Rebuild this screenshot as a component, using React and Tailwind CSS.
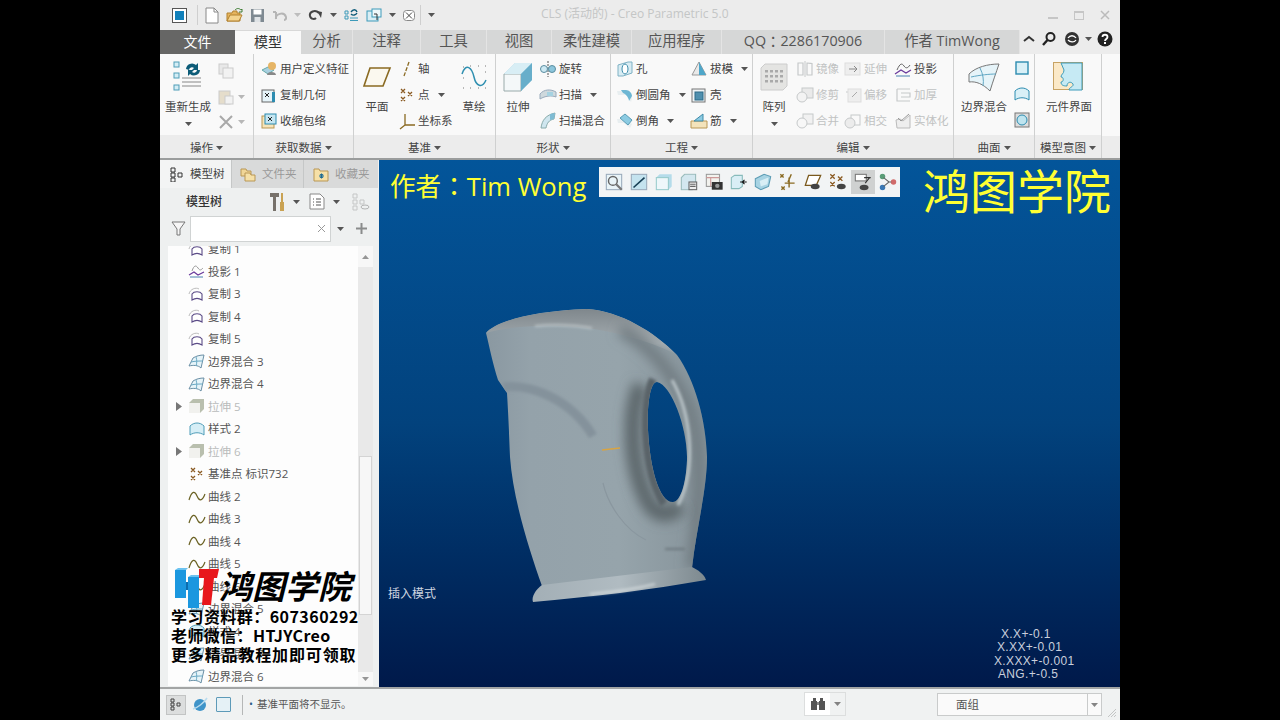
import React from 'react';

const Svg = ({ s = 16, h, className = '', children }) => (
  <svg width={s} height={h || s} viewBox={`0 0 ${s} ${h || s}`} className={`shrink-0 ${className}`} fill="none">
    {children}
  </svg>
);

const Caret = ({ className = '' }) => (
  <svg width="7" height="4" viewBox="0 0 7 4" className={`shrink-0 ${className}`}><path d="M0 0h7L3.5 4z" fill="#555" /></svg>
);

// --- ribbon icons
const Cube = ({ x, y, s = 5 }) => <rect x={x} y={y} width={s} height={s} fill="#d4edf5" stroke="#4f9db8" />;

const RegenIcon = () => (
  <Svg s={32}>
    <Cube x={2} y={1} /><Cube x={2} y={12} /><Cube x={2} y={24} />
    <path d="M14 8a6 6 0 0 1 10-4l2-2v7h-6l2-2a3 3 0 0 0-5 2z" fill="#0d5c78" />
    <path d="M28 9a6 6 0 0 1-10 4l-2 2V9h6l-2 2a3 3 0 0 0 5-2z" fill="#0d5c78" />
    <path d="M10 17h19M10 21h19M10 25h19" stroke="#888" strokeWidth="1.2" />
  </Svg>
);
const PlaneIcon = () => (
  <Svg s={30} h={22}><path d="M8 2h20l-7 18H2z" fill="#fbf8ef" stroke="#8a6a22" strokeWidth="1.6" /></Svg>
);
const SketchIcon = () => (
  <Svg s={28} h={26}>
    <path d="M2 10C6 -2 12 4 14 13s8 12 12 3" stroke="#2f8fb0" strokeWidth="1.5" />
    <path d="M3 3h1M10 2h1M18 2h1M25 2h1M3 24h1M10 24h1M18 24h1M25 24h1M3 14h1M25 8h1" stroke="#777" />
  </Svg>
);
const ExtrudeIcon = () => (
  <Svg s={30}>
    <path d="M1 12 12 1h17v17L18 29H1z" fill="#a9d6e6" />
    <path d="M1 12h17v17H1z" fill="#f4f8f9" stroke="#9aa" />
    <path d="M1 12 12 1h17L18 12z" fill="#d8eef5" />
    <path d="M18 12 29 1v17L18 29z" fill="#67aeca" />
  </Svg>
);
const ArrayIcon = () => (
  <Svg s={28}>
    <path d="M1 5 5 1h22v22l-4 4H1z" fill="#e4e4e2" stroke="#ccc" />
    {[7, 12, 17].map(y => [5, 10, 15, 20].map(x => <rect key={`${x}-${y}`} x={x} y={y} width="3" height="2.5" fill="#aaa" />))}
  </Svg>
);
const BlendBig = () => (
  <Svg s={32} h={30}>
    <path d="M1 12C8 5 20 2 31 2c-3 9-6 17-9 27C15 22 8 19 1 20z" fill="#e6f4f9" stroke="#777" />
    <path d="M12 6c3 6 4 12 3 18M3 15c9-2 19-3 25-3" stroke="#5fa7c4" />
  </Svg>
);
const PuzzleIcon = () => (
  <Svg s={32} h={30}>
    <rect x=".5" y=".5" width="29" height="27" fill="#fbe9c8" stroke="#c7a364" />
    <path d="M8 1h21v27H16c0-3 5-3 4-6-2-3-6-2-6 2-4 0-6-1-6-4 3 0 3-5 0-5 0-3 3-3 3-7z" fill="#c6eaf4" stroke="#3c9cbb" />
  </Svg>
);
const SmallSq = () => <Svg s={16}><rect x="2" y="2" width="12" height="12" fill="#d9f0f7" stroke="#2d8cb0" strokeWidth="1.4" /></Svg>;
const SmallArc = () => <Svg s={16}><path d="M1 14V5c4-4 10-4 14 0v9c-4-3-10-3-14 0z" fill="#d9f0f7" stroke="#2d8cb0" /></Svg>;
const SmallOff = () => <Svg s={16}><rect x="1" y="1" width="14" height="14" fill="#ddd" stroke="#777" /><circle cx="8" cy="8" r="5" fill="#bfe4ef" stroke="#2d8cb0" /></Svg>;

const UdfI = () => <Svg><path d="M1 9l6-3 6 3-6 4z" fill="#a9d0e0" stroke="#6aa" /><circle cx="11" cy="5" r="4" fill="#e6b566" /><path d="M6 14c0-4 9-4 9 0z" fill="#888" /></Svg>;
const CopyGeoI = () => <Svg><rect x="1" y="3" width="12" height="12" fill="#e6f4f9" stroke="#666" /><path d="M4 6l4 4M8 6l-4 4" stroke="#222" /><path d="M11 5v10h3V5z" fill="#2d8cb0" /></Svg>;
const ShrinkI = () => <Svg><rect x="1" y="3" width="12" height="12" fill="#f7e4b8" stroke="#b99755" /><rect x="4" y="1" width="11" height="10" fill="#c6e6f1" stroke="#2d8cb0" /><path d="M7 4l4 4M11 4l-4 4" stroke="#222" /></Svg>;
const AxisI = () => <Svg><path d="M10 1 5 15" stroke="#8a6a22" strokeDasharray="4 1.5" strokeWidth="1.3" /></Svg>;
const PointI = ({ c = '#8a5a22' }) => (
  <Svg>
    <path d="M2 2l4 4M6 2 2 6M9 5l4 4M13 5 9 9M2 10l4 4M6 10l-4 4" stroke={c} strokeWidth="1.3" />
  </Svg>
);
const CsysI = () => <Svg s={18}><path d="M7 2v11M7 13H17M7 13l-5 4" stroke="#8a6a22" strokeWidth="1.3" /></Svg>;
const RevolveI = () => <Svg s={18} h={16}><path d="M9 0v16" stroke="#555" strokeDasharray="2 1" /><ellipse cx="5" cy="8" rx="3.5" ry="3.5" fill="#cde9f3" stroke="#5a8da0" /><ellipse cx="13" cy="8" rx="3.5" ry="3.5" fill="#8cc6dc" stroke="#5a8da0" /></Svg>;
const SweepI = () => <Svg s={18} h={16}><path d="M1 7c4-5 11-5 16-2v5c-5-2-11-1-16 2z" fill="#cfd9dd" stroke="#9ab" /><path d="M8 5h6v4H8z" fill="#a6d2e1" /></Svg>;
const SweepBlendI = () => <Svg s={18}><path d="M2 16C3 8 7 3 16 1l-1 6c-5 1-7 4-8 9z" fill="#cfe6ef" stroke="#8aa" /><path d="M11 2l5-1-1 6-4 1z" fill="#7fbcd4" /></Svg>;
const HoleI = () => <Svg s={18} h={16}><path d="M2 4l10-3h4v11l-9 3H2z" fill="#d8ecf3" stroke="#7fb1c4" /><ellipse cx="9" cy="8" rx="3" ry="5" fill="#fff" stroke="#3d8cab" /></Svg>;
const RoundI = () => <Svg s={18} h={16}><path d="M1 4h8c4 0 7 3 7 7l-1 4-5-7H2z" fill="#e8eef0" /><path d="M5 3h5c3 0 6 3 6 6l-3 5c0-3-3-7-6-8z" fill="#6db6d3" /></Svg>;
const ChamferI = () => <Svg s={18} h={16}><path d="M1 6h9l6 5-2 4-6-5H2z" fill="#e8eef0" /><path d="M4 5l5-4 7 6-4 5z" fill="#8ccbe2" stroke="#5a9db6" /></Svg>;
const DraftI = () => <Svg s={18} h={16}><path d="M2 14 9 1l7 13z" fill="#e9e9e9" stroke="#999" /><path d="M9 1l7 13H9z" fill="#4ea6c9" /></Svg>;
const ShellI = () => <Svg s={18} h={16}><rect x="2" y="2" width="13" height="13" fill="#eef3f5" stroke="#777" /><rect x="5" y="5" width="8" height="8" fill="#4f8fae" stroke="#2c6a88" /></Svg>;
const RibI = () => <Svg s={18} h={16}><path d="M1 8h16v7H1z" fill="#f3e3bb" stroke="#b99755" /><path d="M4 8 13 1v7z" fill="#8ccbe2" stroke="#3f8aa8" /></Svg>;

const gr = '#c6c9ca';
const MirrorI = () => <Svg s={18} h={16}><path d="M9 0v16" stroke={gr} /><path d="M2 2h5v12H2zM11 2c3 0 5 1 5 0v12h-5z" stroke={gr} strokeWidth="1.2" /></Svg>;
const ExtendI = () => <Svg s={18} h={16}><rect x="1" y="2" width="15" height="12" fill="#eee" stroke="#ddd" /><path d="M5 8h7M10 5l3 3-3 3" stroke="#888" /></Svg>;
const TrimI = () => <Svg s={18} h={16}><rect x="6" y="1" width="11" height="10" fill="#eaeaea" stroke={gr} /><circle cx="6" cy="10" r="5" fill="#f3f3f3" stroke={gr} /></Svg>;
const OffsetI = () => <Svg s={18} h={16}><path d="M2 5h12v10" stroke={gr} /><rect x="4" y="2" width="13" height="13" fill="#eee" stroke="#ddd" /><path d="M8 10l5-5" stroke="#aaa" /></Svg>;
const ThickenI = () => <Svg s={18} h={16}><path d="M3 2h13M3 2v12h13M7 6h9v4H7" stroke={gr} strokeWidth="1.2" /></Svg>;
const MergeI = () => <Svg s={18} h={16}><rect x="7" y="1" width="10" height="10" stroke={gr} fill="#f1f1f1" /><circle cx="6" cy="10" r="5" stroke={gr} fill="#f7f7f7" /></Svg>;
const IntersectI = () => <Svg s={18} h={16}><rect x="7" y="2" width="9" height="10" stroke={gr} /><circle cx="6" cy="10" r="5" stroke={gr} fill="#ececec" /></Svg>;
const SolidifyI = () => <Svg s={18} h={16}><path d="M2 7l4-1 3 2 7-6v13H3z" fill="#eee" stroke="#bbb" /><path d="M4 5l3 3 8-7" stroke="#999" /></Svg>;
const ProjectI = () => (
  <Svg s={18} h={16}>
    <path d="M3 9c3-7 5-7 7-4s4 2 6-1" stroke="#666" />
    <path d="M1 13l6-4 5 3 5-3" stroke="#6a3a9c" strokeWidth="1.3" />
    <path d="M2 15h14" stroke="#4a80b0" />
  </Svg>
);

// --- title bar icons
const QuickNew = () => <Svg s={14} h={17}><path d="M1 1h8l4 4v11H1z" fill="#fff" stroke="#888" /><path d="M9 1v4h4" stroke="#888" /></Svg>;
const QuickOpen = () => <Svg s={17} h={16}><path d="M1 6h5l1-2h4v2h3v8H1z" fill="#e5b45e" stroke="#b2812f" /><path d="M1 14l3-6h12l-3 6z" fill="#f4d48f" stroke="#b2812f" /><path d="M9 3c2-2 4-2 6 0l1-1v3h-3" stroke="#3e7d33" /></Svg>;
const QuickSave = () => <Svg s={15}><rect x="1" y="1" width="13" height="13" fill="#7f8a92" /><rect x="3.5" y="1.5" width="8" height="5" fill="#fff" /><rect x="4.5" y="9" width="6" height="5" fill="#dfe3e6" /></Svg>;
const Undo = ({ c }) => <Svg s={15} h={11}><path d="M4 9V2M4 2H1M4 9c-1-5 8-8 10-2 .5 2-1 3-2 3" stroke={c} strokeWidth="2" /></Svg>;
const Redo = () => <Svg s={15} h={11}><path d="M11 3C7-1 1 2 2 6s5 3 6 2" stroke="#444" strokeWidth="2" /><path d="M9 1l5 1-1 6z" fill="#444" /></Svg>;
const Regen2 = () => <Svg s={15}><path d="M1 3h3v3H1zM1 8h3v3H1zM6 10h8M6 12.500h8" stroke="#3d9ab9" /><path d="M7 4c2-3 5-3 6 0M13 5c-1 2-4 3-6 1" stroke="#0c5a78" strokeWidth="1.4" /></Svg>;
const Windows = () => <Svg s={16} h={15}><rect x="1" y="3" width="11" height="10" fill="#d9eef5" stroke="#3d9ab9" /><rect x="6" y="1" width="9" height="8" fill="#eef8fb" stroke="#3d9ab9" /><path d="M8 6h3v6" stroke="#333" /></Svg>;
const CloseBox = () => <Svg s={12} h={11}><rect x=".5" y=".5" width="11" height="10" rx="3" fill="#fff" stroke="#888" /><path d="M3 2.500l6 6M9 2.500l-6 6" stroke="#444" /></Svg>;
const AppBox = () => (
  <span className="w-[15px] h-[15px] border border-[#555] bg-white flex items-center justify-center shrink-0">
    <span className="w-[9px] h-[9px] bg-[#1180ba] block" />
  </span>
);

// --- floating toolbar
const FT = [
  <><rect x="1" y="1" width="14" height="14" fill="#e9f4f8" stroke="#9ab" /><circle cx="7" cy="7" r="4" stroke="#666" strokeWidth="1.3" /><path d="M10 10l5 5" stroke="#777" strokeWidth="2" /></>,
  <><rect x="1" y="1" width="14" height="14" fill="#c4e3ef" stroke="#9ab" /><path d="M3 13 13 4" stroke="#173f55" strokeWidth="1.5" /></>,
  <><path d="M1 4l3-3h11v11l-3 3H1z" fill="#b5dcea" /><rect x="1" y="4" width="11" height="11" fill="#eef7fa" stroke="#9cc" /></>,
  <><path d="M1 4l3-3h10v11l-3 3H1z" fill="#d3e7ef" stroke="#9bb" /><rect x="8" y="8" width="7" height="7" fill="#eee" stroke="#666" /><path d="M9 10h5M9 12h5" stroke="#666" /></>,
  <><rect x="1" y="1" width="12" height="11" fill="#f2f2ee" stroke="#999" /><path d="M1 4h12M5 4v8" stroke="#c99" /><rect x="6" y="8" width="10" height="7" fill="#333" /><circle cx="11" cy="11.500" r="2" fill="#999" /></>,
  <><path d="M1 4l3-2h7v10l-3 2H1z" fill="#d9eef5" stroke="#8bb" /><path d="M9 8h6M13 6l-2 2 2 2" stroke="#111" /></>,
  <><path d="M1 5l8-4 6 2-2 9-7 3-5-3z" fill="#a7d3e3" stroke="#5e9db5" /><path d="M5 7l8-3-1 6-6 2z" fill="#d8eef5" /></>,
  <><path d="M1 1l3 3M4 1 1 4M2 12l3 3M5 12l-3 3M11 1 8 8M5 9h9M9 4v9" stroke="#8a6a22" strokeWidth="1.3" /></>,
  <><path d="M4 2h11l-4 9H1z" fill="#fff" stroke="#7b5a1e" strokeWidth="1.2" /><ellipse cx="10" cy="12" rx="4" ry="2.500" fill="#444" /></>,
  <><path d="M1 1l4 4M5 1 1 5M8 3l4 4M12 3 8 7M1 8l4 4M5 8l-4 4" stroke="#8a5a22" strokeWidth="1.2" /><ellipse cx="11" cy="12" rx="4" ry="2.500" fill="#444" /></>,
  <><rect x="1" y="1" width="10" height="6" fill="#fff" stroke="#777" /><path d="M9 4h6M14 4l-4 5" stroke="#333" /><ellipse cx="9" cy="13" rx="4" ry="2.500" fill="#444" /></>,
  <><circle cx="3" cy="3" r="2.500" fill="#5a9d78" /><circle cx="3" cy="13" r="2.500" fill="#3b78b5" /><circle cx="13" cy="8" r="2.500" fill="#d06a6a" /><path d="M4 4l5 4-5 4M9 8h2" stroke="#666" /></>,
];

// --- model tree icons
const TreeCopy = () => <Svg s={18} h={16}><path d="M1 8C2 3 8 1 11 3" stroke="#bbb" /><path d="M4 14V8c2-3 8-3 10 0v6c-3-2-7-2-10 0z" stroke="#5a4a86" strokeWidth="1.1" fill="#fff" /></Svg>;
const TreeProj = () => <Svg s={18} h={16}><path d="M4 8c2-6 4-6 6-3s3 2 5 0" stroke="#999" /><path d="M1 12l5-3 4 3 6-3" stroke="#6a3a9c" strokeWidth="1.2" /><path d="M2 14h13" stroke="#4a80b0" /></Svg>;
const TreeBlend = () => <Svg s={18} h={16}><path d="M1 13 5 5c3-2 7-3 11-3l-3 13c-3-3-8-3-12-2z" fill="#e6f4f9" stroke="#6a8fa5" /><path d="M8 4c1 3 1 6 0 9M3 9c4-1 8-1 12-1" stroke="#6aa9c4" /></Svg>;
const TreeStyle = () => <Svg s={18} h={16}><path d="M2 14V5c4-4 10-4 14 0v9c-4-3-10-3-14 0z" fill="#d6eef6" stroke="#4f9db8" /></Svg>;
const TreeExtrude = () => <Svg s={18} h={16}><path d="M1 5l4-4h11v10l-4 4H1z" fill="#b9bfae" /><rect x="1" y="5" width="11" height="10" fill="#f1f1ee" /></Svg>;
const TreeCurve = () => <Svg s={18} h={16}><path d="M1 12C4 2 7 3 9 8s5 6 8-2" stroke="#6b6224" strokeWidth="1.2" /></Svg>;
const TreePoint = () => <span className="w-[18px] flex justify-center"><PointI /></span>;

const treeRows = [
  [TreeCopy, '复制 1'], [TreeProj, '投影 1'], [TreeCopy, '复制 3'], [TreeCopy, '复制 4'], [TreeCopy, '复制 5'],
  [TreeBlend, '边界混合 3'], [TreeBlend, '边界混合 4'], [TreeExtrude, '拉伸 5', true], [TreeStyle, '样式 2'],
  [TreeExtrude, '拉伸 6', true], [TreePoint, '基准点 标识732'], [TreeCurve, '曲线 2'], [TreeCurve, '曲线 3'],
  [TreeCurve, '曲线 4'], [TreeCurve, '曲线 5'], [TreeCurve, '曲线 6'], [TreeBlend, '边界混合 5'], [TreeStyle, '样式 4'],
  [TreeBlend, '边界混合 7'], [TreeBlend, '边界混合 6'],
];

const TC = ({ children }) => <span className="font-['Noto_Sans_CJK_TC',sans-serif]">{children}</span>;

const Tab = ({ w, children }) => (
  <div style={{ width: w }} className="h-full flex items-center justify-center bg-[#d6d7d7] border-r border-[#e4e4e4] text-[#555] text-[14.3px] pb-[2px] whitespace-nowrap">{children}</div>
);

const Row = ({ icon: Icon, label, caret, off, w, gap = 'gap-[2px]' }) => (
  <div style={{ width: w }} className={`h-[26px] pt-[2px] flex items-center ${gap} whitespace-nowrap text-[11.5px] ${off ? 'text-[#c0c2c2]' : 'text-[#444]'}`}>
    <span className="w-[18px] flex justify-center shrink-0"><Icon /></span>
    <span>{label}</span>
    {caret && <Caret className="ml-[6px]" />}
  </div>
);

const Big = ({ icon: Icon, label, caret, w, iconH = 'h-[44px]' }) => (
  <div style={{ width: w }} className="flex flex-col items-center shrink-0 text-[11.5px] text-[#444] whitespace-nowrap">
    <div className={`${iconH} flex items-center justify-center`}><Icon /></div>
    <div className="leading-[16px]">{label}</div>
    {caret && <Caret className="mt-[7px]" />}
  </div>
);

const Group = ({ w, title, children, px = '' }) => (
  <div style={{ width: w }} className="h-full flex flex-col border-r border-[#cfd0d0] shrink-0">
    <div className={`h-[81px] flex pt-[1px] ${px}`}>{children}</div>
    <div className="flex-1 bg-[#ececec] flex items-center justify-center gap-[3px] text-[11.5px] text-[#444] pt-[2px]">
      {title}<Caret />
    </div>
  </div>
);

const bodyPath = 'M486 333C495 322 530 311 587 309C620 311 655 332 677 355C695 380 706 420 707 457C707 490 696 530 692 568L542 586C530 552 513 500 510 457C509 430 508 410 507 393L498 380C493 365 489 345 486 333ZM657 382C672 385 688 430 687 460C686 485 680 502 673 502C660 503 650 470 648 430C647 405 650 382 657 382Z';

const Kettle = () => (
  <svg width="240" height="310" viewBox="479 300 240 310" className="absolute left-[100px] top-[140px]" fill="none">
    <defs>
      <linearGradient id="bodyFill" x1="0" y1="0" x2="1" y2="0">
        <stop offset="0" stopColor="#8a98a1" />
        <stop offset=".2" stopColor="#94a2aa" />
        <stop offset=".6" stopColor="#96a4ab" />
        <stop offset="1" stopColor="#86939a" />
      </linearGradient>
      <linearGradient id="capFill" x1="0" y1="0" x2="0" y2="1">
        <stop offset="0" stopColor="#7f878c" />
        <stop offset=".75" stopColor="#a6aeb2" />
        <stop offset="1" stopColor="#8e9ba3" />
      </linearGradient>
      <linearGradient id="baseFill" x1="0" y1="0" x2="1" y2="0">
        <stop offset="0" stopColor="#a3afb6" />
        <stop offset=".5" stopColor="#b0bbc1" />
        <stop offset="1" stopColor="#7d898f" />
      </linearGradient>
      <filter id="b2" filterUnits="userSpaceOnUse" x="479" y="300" width="240" height="310"><feGaussianBlur stdDeviation="1.5" /></filter>
      <filter id="b5" filterUnits="userSpaceOnUse" x="479" y="300" width="240" height="310"><feGaussianBlur stdDeviation="6" /></filter>
      <clipPath id="bodyClip">
        <path clipRule="evenodd" d={bodyPath} />
      </clipPath>
    </defs>
    <path fillRule="evenodd" fill="url(#bodyFill)" d={bodyPath} />
    <g clipPath="url(#bodyClip)">
      <path d="M486 333C495 322 530 311 587 309C620 311 655 332 677 355C660 345 610 327 560 326C530 325 505 328 486 333Z" fill="url(#capFill)" />
      <path d="M535 326C555 324 575 325 592 328" stroke="#c9d1d4" strokeWidth="1.5" filter="url(#b2)" />
      <path d="M620 330C650 345 672 370 690 410C703 450 700 520 692 568" stroke="#6f7a80" strokeWidth="12" filter="url(#b5)" />
      <path d="M641 385C628 415 630 470 650 505C660 518 672 515 680 505" stroke="#5c666b" strokeWidth="16" filter="url(#b5)" />
      <path d="M653 379C642 400 642 470 664 504" stroke="#5a6469" strokeWidth="8" filter="url(#b2)" />
      <path d="M672 380C692 415 696 470 678 505" stroke="#bcc6ca" strokeWidth="3" filter="url(#b2)" />
      <path d="M503 387C530 384 570 398 593 436" stroke="#84929b" strokeWidth="9" filter="url(#b2)" />
      <path d="M603 483C608 505 625 530 646 540" stroke="#8a979f" strokeWidth="1.2" />
      <path d="M665 549H685" stroke="#6b767c" strokeWidth="2" filter="url(#b2)" />
      <path d="M602 450L620 448" stroke="#d9a441" strokeWidth="1.5" />
    </g>
    <path d="M542 585L692 567C698 570 704 574 706 580C650 590 590 597 533 602C531 597 536 589 542 585Z" fill="url(#baseFill)" />
    <path d="M590 594C615 592 640 588 655 584" stroke="#dfe5e7" strokeWidth="1.5" filter="url(#b2)" />
  </svg>
);

const Watermark = () => (
  <div className="absolute left-[11px] top-[406px] text-black font-bold whitespace-nowrap font-['Noto_Sans_CJK_SC',sans-serif]">
    <div className="flex items-center h-[44px] ml-[4px]">
      <svg width="45" height="42" viewBox="0 0 45 42" className="shrink-0">
        <path d="M0 3h11v28H0zM13 10h11v31H13z" fill="#1b97df" />
        <path d="M11 15h2v8h-2z" fill="#0d6cae" />
        <path d="M3 1h10l-2 2H0zM16 8h10l-2 2H13z" fill="#6cc3f0" />
        <path d="M24 2h20l-2 9H24z" fill="#e8171c" />
        <path d="M29 11h10l-3 27h-9z" fill="#e8171c" />
      </svg>
      <span className="text-[33px] italic leading-none -ml-[1px] mb-[6px]">鸿图学院</span>
    </div>
    <div className="text-[16px] leading-[19px] tracking-[0.45px] -mt-[3px]">学习资料群：607360292</div>
    <div className="text-[16px] leading-[19px] tracking-[0.4px]">老师微信：HTJYCreo</div>
    <div className="text-[16px] leading-[19px] tracking-[0.85px]">更多精品教程加即可领取</div>
  </div>
);

const App = () => (
  <div className="w-[1280px] h-[720px] overflow-hidden bg-black flex justify-center font-['Open_Sans','Noto_Sans_CJK_SC',sans-serif] text-[12px] text-[#444]">
    <div className="w-[960px] h-full flex flex-col bg-[#ececec]">

      {/* title bar */}
      <div className="h-[30px] flex items-center pl-[12px] relative shrink-0">
        <AppBox />
        <div className="w-px h-[20px] bg-[#cfcfcf] ml-[10px] mr-[7px]" />
        <div className="flex items-center gap-[7px]">
          <QuickNew /><QuickOpen /><QuickSave /><Undo c="#b5b5b5" /><Caret className="opacity-30" /><Redo /><Caret /><Regen2 /><Windows /><Caret /><CloseBox />
        </div>
        <div className="w-px h-[20px] bg-[#cfcfcf] ml-[5px] mr-[7px]" />
        <Caret />
        <div className="absolute left-[381px] top-[5px] text-[12px] text-[#c4c6c6] whitespace-nowrap">CLS (活动的) - Creo Parametric 5.0</div>
        <div className="ml-auto flex items-center gap-[16px] pr-[10px]">
          <span className="w-[10px] h-[2px] bg-[#c6c6c6] mt-[6px]" />
          <span className="w-[10px] h-[9px] border border-[#c6c6c6] border-t-2" />
          <svg width="10" height="10" viewBox="0 0 10 10" fill="none"><path d="M1 1l8 8M9 1l-8 8" stroke="#bbb" strokeWidth="1.5" /></svg>
        </div>
      </div>

      {/* tabs */}
      <div className="h-[24px] flex items-stretch shrink-0">
        <div className="w-[75px] bg-[#666665] text-white text-[14px] flex items-center justify-center pb-[2px]">文件</div>
        <div className="w-[66px] bg-[#f9f9f9] text-[#333] text-[14px] flex items-center justify-center border-t border-[#d8d8d8] pb-[2px]">模型</div>
        <Tab w={52}>分析</Tab>
        <Tab w={68}>注释</Tab>
        <Tab w={66}>工具</Tab>
        <Tab w={65}>视图</Tab>
        <Tab w={80}>柔性建模</Tab>
        <Tab w={90}>应用程序</Tab>
        <Tab w={163}>QQ<TC>：</TC>2286170906</Tab>
        <Tab w={135}>作者 TimWong</Tab>
        <div className="flex-1 flex items-center pl-[3px] pb-[6px] gap-[5px]">
          <svg width="12" height="8" viewBox="0 0 12 8" fill="none"><path d="M1 6l5-4 5 4" stroke="#333" strokeWidth="2" /></svg>
          <svg width="16" height="16" viewBox="0 0 16 16" fill="none" className="ml-[1px]"><circle cx="9.500" cy="6" r="4" stroke="#222" strokeWidth="2" /><path d="M6.500 9 2 14" stroke="#222" strokeWidth="2.400" /></svg>
          <svg width="16" height="16" viewBox="0 0 16 16" fill="none" className="ml-[2px]"><circle cx="8" cy="8" r="7" fill="#333" /><path d="M4 7c2-3 6-3 8 0M4 9c2 2 6 3 8 0" stroke="#fff" strokeWidth="1.300" /></svg>
          <Caret />
          <svg width="16" height="16" viewBox="0 0 16 16" fill="none"><circle cx="8" cy="8" r="7.500" fill="#222" /><path d="M5.500 6c0-3 5-3 5 0 0 2-2.500 2-2.500 4" stroke="#fff" strokeWidth="1.800" /><rect x="7" y="11" width="2" height="2" fill="#fff" /></svg>
        </div>
      </div>

      {/* ribbon */}
      <div className="h-[106px] flex bg-[#f9f9f9] border-b-2 border-[#9a9c9c] shrink-0">
        <Group w={94} title="操作" px="pl-[4px]">
          <Big icon={RegenIcon} label="重新生成" caret w={48} iconH="h-[44px]" />
          <div className="flex flex-col ml-[6px] pt-[3px]">
            <div className="h-[26px] flex items-center"><Svg s={16}><rect x="1" y="1" width="9" height="10" fill="#e8e8e8" stroke="#ccc" /><rect x="5" y="5" width="10" height="10" fill="#f2f2f2" stroke="#ccc" /></Svg></div>
            <div className="h-[26px] flex items-center gap-[4px]"><Svg s={16}><rect x="1" y="2" width="11" height="13" fill="#e5ddcb" stroke="#ccc" /><rect x="7" y="7" width="8" height="8" fill="#f2f2f2" stroke="#ccc" /></Svg><Caret className="opacity-40" /></div>
            <div className="h-[26px] flex items-center gap-[4px]"><svg width="16" height="14" viewBox="0 0 16 14" fill="none"><path d="M2 1l12 12M14 1 2 13" stroke="#a9a9a9" strokeWidth="2" /></svg><Caret className="opacity-40" /></div>
          </div>
        </Group>

        <Group w={100} title="获取数据" px="pl-[6px] pt-[1px]">
          <div className="flex flex-col">
            <Row icon={UdfI} label="用户定义特征" />
            <Row icon={CopyGeoI} label="复制几何" />
            <Row icon={ShrinkI} label="收缩包络" />
          </div>
        </Group>

        <Group w={142} title="基准" px="pl-[5px]">
          <Big icon={PlaneIcon} label="平面" w={36} />
          <div className="flex flex-col ml-[3px] w-[58px]">
            <Row icon={AxisI} label="轴" />
            <Row icon={PointI} label="点" caret />
            <Row icon={CsysI} label="坐标系" />
          </div>
          <Big icon={SketchIcon} label="草绘" w={36} />
        </Group>

        <Group w={115} title="形状" px="pl-[4px]">
          <Big icon={ExtrudeIcon} label="拉伸" w={36} />
          <div className="flex flex-col ml-[3px]">
            <Row icon={RevolveI} label="旋转" />
            <Row icon={SweepI} label="扫描" caret />
            <Row icon={SweepBlendI} label="扫描混合" />
          </div>
        </Group>

        <Group w={142} title="工程" px="pl-[5px]">
          <div className="flex flex-col w-[74px]">
            <Row icon={HoleI} label="孔" />
            <Row icon={RoundI} label="倒圆角" caret />
            <Row icon={ChamferI} label="倒角" caret />
          </div>
          <div className="flex flex-col">
            <Row icon={DraftI} label="拔模" caret />
            <Row icon={ShellI} label="壳" />
            <Row icon={RibI} label="筋" caret />
          </div>
        </Group>

        <Group w={201} title="编辑" px="pl-[5px]">
          <Big icon={ArrayIcon} label="阵列" caret w={32} />
          <div className="flex flex-col ml-[6px] w-[48px]">
            <Row icon={MirrorI} label="镜像" off />
            <Row icon={TrimI} label="修剪" off />
            <Row icon={MergeI} label="合并" off />
          </div>
          <div className="flex flex-col w-[50px]">
            <Row icon={ExtendI} label="延伸" off />
            <Row icon={OffsetI} label="偏移" off />
            <Row icon={IntersectI} label="相交" off />
          </div>
          <div className="flex flex-col">
            <Row icon={ProjectI} label="投影" />
            <Row icon={ThickenI} label="加厚" off />
            <Row icon={SolidifyI} label="实体化" off />
          </div>
        </Group>

        <Group w={81} title="曲面" px="pl-[6px]">
          <Big icon={BlendBig} label="边界混合" w={48} />
          <div className="flex flex-col ml-[6px]">
            <div className="h-[26px] flex items-center"><SmallSq /></div>
            <div className="h-[26px] flex items-center"><SmallArc /></div>
            <div className="h-[26px] flex items-center"><SmallOff /></div>
          </div>
        </Group>

        <Group w={67} title="模型意图" px="pl-[10px]">
          <Big icon={PuzzleIcon} label="元件界面" w={48} />
        </Group>
        <div className="flex-1 flex flex-col"><div className="h-[82px]" /><div className="flex-1 bg-[#ececec]" /></div>
      </div>

      {/* main */}
      <div className="flex-1 flex min-h-0">
        {/* left panel */}
        <div className="w-[219px] h-full flex flex-col bg-[#eef0f0] shrink-0 relative">
          <div className="h-[28px] flex shrink-0 text-[11.5px]">
            <div className="w-[71px] bg-[#f3f4f4] flex items-center gap-[5px] pl-[10px] text-[#444]">
              <Svg s={15} h={15}><path d="M1 1h4v4H1zM1 6h4v4H1zM1 11h4v4H1zM8 6h4v4H8z" stroke="#333" /></Svg>模型树
            </div>
            <div className="w-[73px] bg-[#d9dada] border-x border-[#c5c7c7] flex items-center gap-[5px] pl-[8px] text-[#999]">
              <Svg s={17}><path d="M1 3h5l1 2h4v5H1z" fill="#f1d697" stroke="#b99755" /><path d="M5 7h5l1 2h4v6H5z" fill="#f6e0a7" stroke="#b99755" /></Svg>文件夹
            </div>
            <div className="w-[74px] bg-[#d9dada] flex items-center gap-[5px] pl-[9px] text-[#999]">
              <Svg s={17}><path d="M1 3h5l1 2h8v10H1z" fill="#f6e0a7" stroke="#b99755" /><path d="M6 10h5M8.500 7.500v5M7 8l3 4M10 8l-3 4" stroke="#1c6a92" /></Svg>收藏夹
            </div>
          </div>
          <div className="h-[27px] flex items-center shrink-0 relative">
            <span className="ml-[26px] font-medium text-[#333]">模型树</span>
            <svg width="16" height="20" viewBox="0 0 16 20" className="ml-[47px]"><path d="M1 1h9v4H7v14H4V5H1z" fill="#77716a" /><path d="M12 1h2v9h1v9h-4v-9h1z" fill="#c9a253" /></svg>
            <Caret className="ml-[8px]" />
            <Svg s={16} h={17} className="ml-[9px]"><path d="M1 1h10l4 4v11H1z" fill="#fff" stroke="#888" /><path d="M4 6h1M7 6h5M4 9h1M7 9h5M4 12h1M7 12h5" stroke="#555" /></Svg>
            <Caret className="ml-[8px]" />
            <Svg s={18} className="ml-[12px] opacity-40"><path d="M1 1h4v4H1zM1 7h4v4H1zM1 13h4v4H1zM8 7h4v4H8z" stroke="#888" /><ellipse cx="13" cy="14" rx="4" ry="2" stroke="#555" /></Svg>
          </div>
          <div className="h-[27px] flex items-center shrink-0">
            <svg width="15" height="15" viewBox="0 0 15 15" className="ml-[11px]"><path d="M1 1h13L9 8v6H6V8z" stroke="#777" fill="#f6f6f6" /></svg>
            <div className="w-[141px] h-[26px] ml-[4px] bg-white border border-[#d0d3d3] flex items-center justify-end pr-[4px]">
              <svg width="9" height="9" viewBox="0 0 9 9" fill="none"><path d="M1 1l7 7M8 1 1 8" stroke="#999" /></svg>
            </div>
            <Caret className="ml-[6px]" />
            <svg width="11" height="11" viewBox="0 0 11 11" fill="none" className="ml-[12px]"><path d="M5.500 0v11M0 5.500h11" stroke="#8a8c8c" strokeWidth="2" /></svg>
          </div>
          <div className="flex-1 min-h-0 flex ml-[8px] mr-[6px] mt-[4px] mb-[1px]">
            <div className="flex-1 bg-[#fdfdfd] overflow-hidden relative">
              <div className="-mt-[8.5px]">
                {treeRows.map(([Icon, label, faded], i) => (
                  <div key={i} className={`h-[22.5px] flex items-center text-[11.5px] whitespace-nowrap ${faded ? 'text-[#b9bbbb]' : 'text-[#555]'}`}>
                    <span className="w-[20px] flex justify-center pl-[1px]">
                      {faded && <svg width="6" height="9" viewBox="0 0 6 9"><path d="M0 0l6 4.500L0 9z" fill="#777" /></svg>}
                    </span>
                    <Icon />
                    <span className="ml-[2px]">{label}</span>
                  </div>
                ))}
              </div>
            </div>
            <div className="w-[15px] bg-[#e9e9e9] flex flex-col items-center">
              <div className="w-full h-[21px] bg-[#f7f7f7] flex items-center justify-center"><Caret className="rotate-180 opacity-60" /></div>
              <div className="h-[189px]" />
              <div className="w-[13px] h-[159px] bg-[#f7f7f7] border border-[#d4d4d4]" />
              <div className="flex-1" />
              <div className="w-full h-[14px] bg-[#f7f7f7] flex items-center justify-center"><Caret className="opacity-60" /></div>
            </div>
          </div>
          <Watermark />
        </div>

        {/* graphics area */}
        <div className="flex-1 relative bg-gradient-to-b from-[#03559a] via-[#02427d] to-[#00194a] overflow-hidden">
          <div className="absolute left-[11px] top-[7px] text-[25.6px] leading-[36px] text-[#ffff33] whitespace-nowrap"><TC>作者：</TC>Tim Wong</div>
          <div className="absolute left-[544px] top-[0px] text-[47px] leading-[62px] text-[#ffff33] whitespace-nowrap">鸿图学院</div>

          <div className="absolute left-[220px] top-[7px] w-[301px] h-[30px] bg-[#f2f4f5] flex items-center pl-[3px] gap-[1px]">
            {FT.map((icon, i) => (
              <div key={i} className={`w-[24px] h-[24px] flex items-center justify-center ${i === 10 ? 'bg-[#cfd1d1]' : ''}`}>
                <Svg className="scale-110">{icon}</Svg>
              </div>
            ))}
          </div>

          <Kettle />

          <div className="absolute left-[9px] top-[425px] text-[12px] text-[#cfd6e0]">插入模式</div>
          <div className="absolute left-[615px] top-[468px] text-[12px] leading-[13.3px] tracking-[0.35px] text-[#c9cfdc] whitespace-nowrap font-['Liberation_Sans',sans-serif]">
            <div className="ml-[7px]">X.X+-0.1</div>
            <div className="ml-[3px]">X.XX+-0.01</div>
            <div>X.XXX+-0.001</div>
            <div className="ml-[4px]">ANG.+-0.5</div>
          </div>
        </div>
      </div>

      {/* status bar */}
      <div className="h-[33px] flex items-center bg-[#f0f2f2] border-t-2 border-[#a3a5a5] shrink-0 pl-[6px] relative">
        <div className="w-[20px] h-[20px] bg-[#dcdede] border border-[#c2c4c4] flex items-center justify-center">
          <Svg s={13}><path d="M1 1h3v3H1zM1 5h3v3H1zM1 9h3v3H1zM7 5h3v3H7z" stroke="#444" /></Svg>
        </div>
        <Svg s={18} className="ml-[5px]"><circle cx="9" cy="9" r="6" fill="#3f94c9" /><path d="M2 13C6 12 13 7 16 2" stroke="#b9dcef" strokeWidth="1.5" /></Svg>
        <span className="w-[15px] h-[15px] ml-[7px] bg-[#e5f1f6] border border-[#5d9ab8] rounded-[1px]" />
        <div className="w-px h-[20px] bg-[#b5b7b7] ml-[11px] mr-[6px]" />
        <span className="text-[10.5px] text-[#555]"><span className="text-[#2d5f88] mr-[4px]">•</span>基准平面将不显示。</span>
        <div className="absolute left-[644px] top-[3px] h-[24px] flex items-stretch border border-[#dcdede]">
          <div className="w-[25px] bg-white flex items-center justify-center">
            <Svg s={16} h={14}><path d="M3 1h3v3h1v9H1V4h2zM10 1h3v3h2v9H9V4h1z" fill="#555" /><path d="M7 5h2v3H7z" fill="#888" /></Svg>
          </div>
          <div className="w-[15px] flex items-center justify-center"><Caret className="opacity-70" /></div>
        </div>
        <div className="absolute left-[777px] top-[4px] w-[165px] h-[23px] bg-[#fafafa] border border-[#c9cbcb] flex items-center pl-[18px] text-[11.5px] text-[#555]">
          面组
          <div className="ml-auto w-[14px] h-full border-l border-[#c9cbcb] flex items-center justify-center"><Caret className="opacity-70" /></div>
        </div>
        <svg width="10" height="10" viewBox="0 0 10 10" fill="none" className="absolute right-[3px] bottom-[2px]"><path d="M9 1 1 9M9 4 4 9M9 7 7 9" stroke="#c3c5c5" /></svg>
      </div>
    </div>
  </div>
);

export default App;
